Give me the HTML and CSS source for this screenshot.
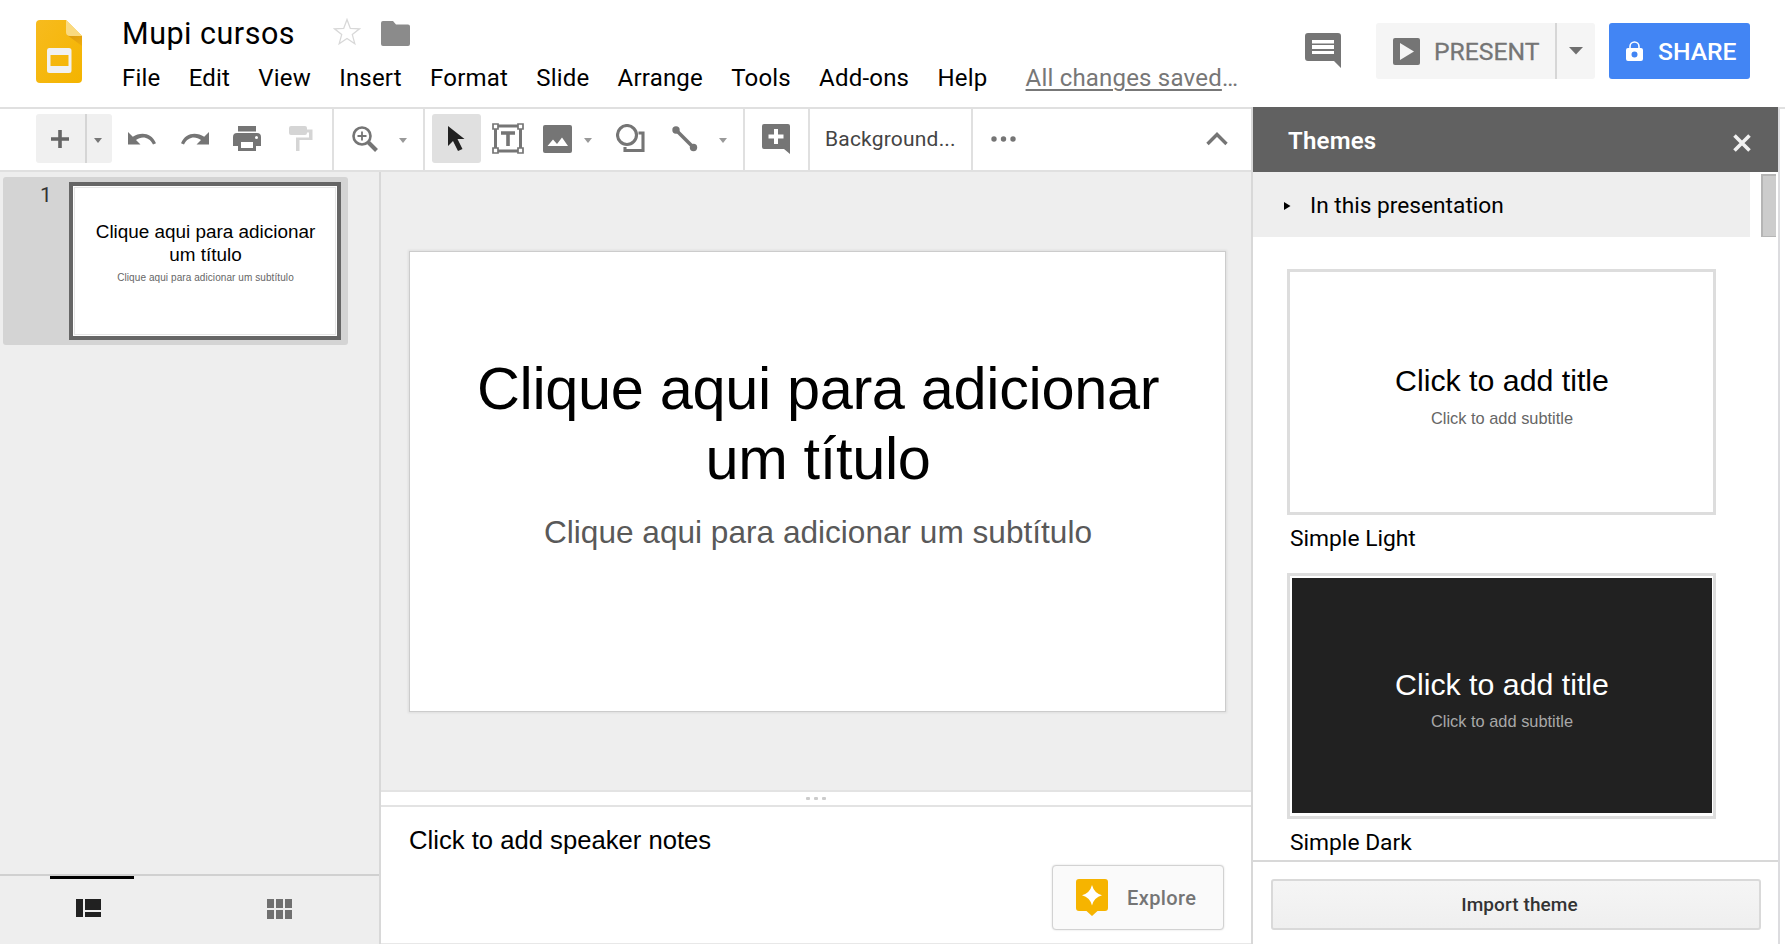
FILE: index.html
```html
<!DOCTYPE html>
<html lang="en">
<head>
<meta charset="utf-8">
<title>Mupi cursos</title>
<link rel="stylesheet" href="styles.css">
</head>
<body>
<div class="app">
  <header class="header">
    <svg class="logo" width="46" height="63" viewBox="0 0 46 63">
      <defs>
        <linearGradient id="page" x1="0" y1="0" x2="1" y2="1"><stop offset="0" stop-color="#f7bb1e"/><stop offset="1" stop-color="#f4b400"/></linearGradient>
        <linearGradient id="shade" x1="0" y1="0" x2="1" y2="1"><stop offset="0" stop-color="#d99a12"/><stop offset="1" stop-color="#f0ac0a"/></linearGradient>
      </defs>
      <path fill="url(#page)" d="M4 0h26l16 16v43a4 4 0 0 1-4 4H4a4 4 0 0 1-4-4V4a4 4 0 0 1 4-4z"/>
      <path fill="url(#shade)" d="M31 15l15 11V16z"/>
      <path fill="#fada80" d="M30 0l16 16H34a4 4 0 0 1-4-4z"/>
      <path fill="#f1f1f1" fill-rule="evenodd" d="M13 28h20a2.500 2.500 0 0 1 2.500 2.500v20a2.500 2.500 0 0 1-2.500 2.500H13.500a2.500 2.500 0 0 1-2.500-2.500v-20A2.500 2.500 0 0 1 13 28zm1.500 7v11h18V35z"/>
    </svg>
    <div class="headings">
      <div class="title-row">
        <h1 class="doc-title">Mupi cursos</h1>
        <svg class="star" width="28" height="28" viewBox="0 0 28 28"><path fill="none" stroke="#d8d8d8" stroke-width="1.300" d="M14 1.500l3.300 8.900 9.200.4-7.200 5.800 2.500 9.100-7.800-5.200-7.800 5.200 2.500-9.100-7.200-5.800 9.200-.4z"/></svg>
        <svg class="folder" width="29" height="25" viewBox="0 0 29 25"><path fill="#8b8b8b" d="M2 0h10l3 3.500h12a2 2 0 0 1 2 2V23a2 2 0 0 1-2 2H2a2 2 0 0 1-2-2V2a2 2 0 0 1 2-2z"/></svg>
      </div>
      <nav class="menu">
        <span>File</span><span>Edit</span><span>View</span><span>Insert</span><span>Format</span><span>Slide</span><span>Arrange</span><span>Tools</span><span>Add-ons</span><span>Help</span>
        <span class="saved"><u>All changes saved</u>…</span>
      </nav>
    </div>
    <div class="actions">
      <svg class="comments" width="36" height="36" viewBox="0 0 36 36"><path fill="#757575" fill-rule="evenodd" d="M3 0h30a3 3 0 0 1 3 3v32l-7-7H3a3 3 0 0 1-3-3V3a3 3 0 0 1 3-3zm4 7v3.500h22V7zm0 5v4h22v-4zm0 6v3h22v-3z"/></svg>
      <div class="present">
        <div class="present-main">
          <svg width="27" height="27" viewBox="0 0 27 27"><rect width="27" height="27" rx="2" fill="#757575"/><path fill="#f5f5f5" d="M7 5v17l14-8.500z"/></svg>
          <span>PRESENT</span>
        </div>
        <div class="present-menu"><svg width="14" height="8" viewBox="0 0 14 8"><path fill="#6f6f6f" d="M0 0h14L7 7.500z"/></svg></div>
      </div>
      <div class="share">
        <svg width="17" height="20" viewBox="0 0 17 20"><path fill="none" stroke="#fff" stroke-width="1.600" d="M4 8V5.500a4.500 4.500 0 0 1 9 0V8"/><path fill="#fff" fill-rule="evenodd" d="M2 7h13a2 2 0 0 1 2 2v9a2 2 0 0 1-2 2H2a2 2 0 0 1-2-2V9a2 2 0 0 1 2-2zm6.500 3.500a3 3 0 1 0 0 6 3 3 0 0 0 0-6z"/></svg>
        <span>SHARE</span>
      </div>
    </div>
  </header>

  <div class="below">
    <div class="editor">
      <div class="toolbar">
        <div class="group group-file">
          <div class="new-slide">
            <div class="new-main"><svg width="18" height="18" viewBox="0 0 18 18"><path fill="none" stroke="#666" stroke-width="3.600" d="M9 0v18M0 9h18"/></svg></div>
            <div class="new-menu"><i class="caret caret-strong"></i></div>
          </div>
          <div class="tool"><svg width="28" height="14" viewBox="0 0 28 14"><path fill="#757575" d="M0 0v12.500h12.500L8 8C13.500 4 21 4.500 25 12.500l3-1.200C23.500 0 12 0 4.800 4.800z"/></svg></div>
          <div class="tool"><svg width="28" height="14" viewBox="0 0 28 14"><path fill="#757575" d="M28 0v12.500H15.500L20 8C14.500 4 7 4.500 3 12.500l-3-1.200C4.500 0 16 0 23.200 4.800z"/></svg></div>
          <div class="tool print"><svg width="28" height="25" viewBox="0 0 28 25"><path fill="#757575" fill-rule="evenodd" d="M5 0h18v5.500H5zM4 7h20a4 4 0 0 1 4 4v9h-5v5H5v-5H0v-9a4 4 0 0 1 4-4zm19.500 3a1.500 1.500 0 1 0 0 3 1.500 1.500 0 0 0 0-3zM8 16v6h12v-6z"/></svg></div>
          <div class="tool"><svg width="24" height="25" viewBox="0 0 24 25"><path fill="#d5d5d5" d="M2 0h14a2 2 0 0 1 2 2v1.500h5.500v10.500h-13v11H7V11.500h13V6.500h-2V7a2 2 0 0 1-2 2H2a2 2 0 0 1-2-2V2a2 2 0 0 1 2-2z"/></svg></div>
        </div>
        <div class="group group-zoom">
          <div class="tool w34"><svg width="26" height="26" viewBox="0 0 26 26"><g fill="none" stroke="#757575"><circle cx="10" cy="10" r="8.500" stroke-width="2.600"/><path stroke-width="1.800" d="M10 5.500v9M5.500 10h9"/><path stroke-width="4" d="M16.500 16.500l8 8"/></g></svg></div>
          <div class="tool w41"><i class="caret"></i></div>
        </div>
        <div class="group group-insert">
          <div class="tool selected"><svg width="17" height="25" viewBox="0 0 17 25"><path fill="#212121" d="M0 0v20l5-5 5 10 4.500-2L9.500 13H16.500z"/></svg></div>
          <div class="tool w54"><svg width="32" height="31" viewBox="0 0 32 31"><g fill="none" stroke="#757575"><path stroke-width="3" d="M3.500 3h25v25h-25z"/><g fill="#fff" stroke-width="1.700"><path d="M1 1h5v5H1zM26 1h5v5h-5zM1 25h5v5H1zM26 25h5v5h-5z"/></g><path stroke-width="3.600" d="M9 10h14M16 10v13"/></g></svg></div>
          <div class="tool w45"><svg width="29" height="28" viewBox="0 0 29 28"><rect width="29" height="28" rx="2" fill="#757575"/><path fill="#fff" d="M4.500 21L10 14.500l4 4.500 5-6.500 6 8.500z"/></svg></div>
          <div class="tool w17"><i class="caret"></i></div>
          <div class="tool w66"><svg width="29" height="29" viewBox="0 0 29 29"><g fill="none" stroke="#757575" stroke-width="3.100"><circle cx="11" cy="11" r="9.500"/><path d="M22.500 9h4.500v17.500H9V23"/></g></svg></div>
          <div class="tool w39"><svg width="26" height="26" viewBox="0 0 26 26"><path stroke="#757575" stroke-width="3.600" d="M4 4l18 18"/><circle cx="4" cy="4" r="3.700" fill="#757575"/><circle cx="21.500" cy="21.500" r="3.700" fill="#757575"/></svg></div>
          <div class="tool w39 line-menu"><i class="caret"></i></div>
        </div>
        <div class="group"><div class="tool w63"><svg width="28" height="30" viewBox="0 0 28 30"><path fill="#757575" d="M2 0h24a2 2 0 0 1 2 2v28l-6-5H2a2 2 0 0 1-2-2V2a2 2 0 0 1 2-2z"/><path fill="none" stroke="#fff" stroke-width="4" d="M14 5v15M6.500 12.500h15"/></svg></div></div>
        <div class="group group-background"><span>Background...</span></div>
        <div class="group group-more">
          <div class="tool w61"><svg width="25" height="6" viewBox="0 0 25 6" fill="#757575"><circle cx="3" cy="3" r="2.700"/><circle cx="12.500" cy="3" r="2.700"/><circle cx="22" cy="3" r="2.700"/></svg></div>
          <div class="tool w69"><svg width="22" height="14" viewBox="0 0 22 14"><path fill="none" stroke="#757575" stroke-width="3.400" d="M1.500 12L11 2.500l9.500 9.500"/></svg></div>
        </div>
      </div>

      <div class="work">
        <aside class="filmstrip">
          <div class="film-list">
            <div class="film-item">
              <span class="film-number">1</span>
              <div class="thumb">
                <p class="thumb-title">Clique aqui para adicionar<br>um título</p>
                <p class="thumb-sub">Clique aqui para adicionar um subtítulo</p>
              </div>
            </div>
          </div>
          <div class="film-views">
            <div class="view view-active"><svg width="25" height="18" viewBox="0 0 25 18" fill="#212121"><path d="M0 0h7v18H0zM9 0h16v11H9zM9 13h16v5H9z"/></svg></div>
            <div class="view"><svg width="25" height="20" viewBox="0 0 25 20" fill="#707070"><path d="M0 0h7v9H0zM9 0h7v9H9zM18 0h7v9h-7zM0 11h7v9H0zM9 11h7v9H9zM18 11h7v9h-7z"/></svg></div>
          </div>
        </aside>
        <main class="stage">
          <div class="canvas">
            <section class="slide">
              <p class="slide-title">Clique aqui para adicionar<br>um título</p>
              <p class="slide-sub">Clique aqui para adicionar um subtítulo</p>
            </section>
          </div>
          <div class="splitter"><i></i><i></i><i></i></div>
          <div class="notes">
            <p>Click to add speaker notes</p>
            <div class="explore">
              <svg width="32" height="37" viewBox="0 0 32 37"><path fill="#f6b400" d="M3 0h26a3 3 0 0 1 3 3v26a3 3 0 0 1-3 3h-7.500L16 37l-5.500-5H3a3 3 0 0 1-3-3V3a3 3 0 0 1 3-3z"/><path fill="#fff" d="M16 6q2 8 10 10.300-8 2.200-10 10.200-2-8-10-10.200Q14 14 16 6z"/></svg>
              <span>Explore</span>
            </div>
          </div>
        </main>
      </div>
    </div>

    <aside class="themes">
      <div class="themes-head">
        <h2>Themes</h2>
        <svg width="18" height="18" viewBox="0 0 18 18"><path stroke="#f1f1f1" stroke-width="3.600" d="M1.500 1.500l15 15M16.500 1.500l-15 15"/></svg>
      </div>
      <div class="themes-body">
        <div class="themes-list">
          <div class="in-this">
            <svg width="7" height="8" viewBox="0 0 7 8"><path d="M0 0v8l6.500-4z"/></svg>
            <span>In this presentation</span>
          </div>
          <div class="card">
            <div class="preview light"><p class="card-title">Click to add title</p><p class="card-sub">Click to add subtitle</p></div>
          </div>
          <div class="card-name">Simple Light</div>
          <div class="card">
            <div class="preview dark"><p class="card-title">Click to add title</p><p class="card-sub">Click to add subtitle</p></div>
          </div>
          <div class="card-name">Simple Dark</div>
        </div>
        <div class="scroll"><div class="scroll-thumb"></div></div>
      </div>
      <div class="themes-foot"><div class="import">Import theme</div></div>
    </aside>
    <div class="edge"></div>
  </div>
</div>
</body>
</html>
```
FILE: styles.css
```css
* { box-sizing: border-box; margin: 0; padding: 0; }
body { background: #fff; font-family: Roboto, sans-serif; color: #000; }
svg { display: block; flex: none; }
.app { width: 1785px; height: 944px; display: flex; flex-direction: column; overflow: hidden; }

.header { height: 107px; display: flex; padding-left: 36px; flex: none; }
.logo { margin-top: 20px; }
.headings { padding-left: 40px; flex: 1; }
.title-row { height: 58px; display: flex; align-items: flex-start; padding-top: 16px; }
.doc-title { font-size: 30.500px; font-weight: 400; line-height: 36px; width: 211px; letter-spacing: 0.500px; white-space: nowrap; }
.star { margin-top: 2px; }
.folder { margin: 5px 0 0 20px; }
.menu { display: flex; font-size: 24px; line-height: 28px; padding-top: 6px; gap: 28.200px; white-space: nowrap; letter-spacing: 0.200px; }
.saved { color: #777; margin-left: 10px; }
.saved u { text-underline-offset: 3px; text-decoration-thickness: 2px; }

.actions { display: flex; padding: 23px 35px 0 0; }
.comments { margin: 10px 35px 0 0; }
.present { width: 219px; height: 56px; background: #f5f5f5; border-radius: 3px; display: flex; color: #757575; font-size: 24.700px; margin-right: 14px; }
.present-main { width: 181px; border-right: 2px solid #d6d6d6; padding: 0 0 0 17px; display: flex; align-items: center; gap: 14px; -webkit-text-stroke: 0.300px #757575; }
.present-menu { flex: 1; display: flex; align-items: center; justify-content: center; }
.share { width: 141px; height: 56px; background: #4285f4; border-radius: 3px; color: #fff; display: flex; align-items: center; font-size: 24.700px; font-weight: 500; padding: 0 0 0 17px; gap: 15px; }

.below { flex: 1; display: flex; min-height: 0; }
.editor { width: 1251px; display: flex; flex-direction: column; }
.toolbar { height: 65px; border-top: 2px solid #e0e0e0; border-bottom: 2px solid #e0e0e0; display: flex; flex: none; }
.group { display: flex; align-items: center; border-right: 2px solid #e0e0e0; padding-bottom: 2px; }
.group-file { width: 334px; padding-left: 36px; }
.group-zoom { width: 91px; padding-left: 14px; }
.group-insert { padding-left: 7px; }
.group-background { width: 163px; padding-left: 15px; font-size: 21px; letter-spacing: 0.200px; color: #444; }
.group-more { flex: 1; justify-content: space-between; border-right: 0; }
.new-slide { width: 76px; height: 49px; background: #f0f0f0; border-radius: 3px; display: flex; margin-right: 3px; }
.new-main { width: 51px; border-right: 2px solid #d5d5d5; display: flex; align-items: center; padding-left: 15px; }
.new-menu { flex: 1; display: flex; align-items: center; padding-left: 7px; }
.tool { width: 53px; height: 49px; display: flex; align-items: center; justify-content: center; }
.print { padding-right: 2px; }
.selected { width: 49px; background: #e0e0e0; border-radius: 3px; }
.w17 { width: 17px; padding-right: 1px; } .w34 { width: 34px; } .w39 { width: 39px; } .w41 { width: 41px; }
.w45 { width: 45px; } .w54 { width: 54px; } .w61 { width: 61px; } .w63 { width: 63px; padding-right: 2px; }
.w66 { width: 68px; padding-right: 2px; } .w69 { width: 69px; }
.line-menu { padding-right: 2px; }
.caret { border: 4.500px solid transparent; border-top: 5px solid #999; border-bottom: 0; margin-top: 3px; }
.caret-strong { border-top-color: #777; }

.work { flex: 1; display: flex; min-height: 0; }
.filmstrip { width: 381px; background: #eee; border-right: 2px solid #d8d8d8; display: flex; flex-direction: column; }
.film-list { flex: 1; padding: 5px 0 0 3px; }
.film-item { width: 345px; height: 168px; background: #d4d4d4; border-radius: 3px; display: flex; padding-top: 5px; }
.film-number { width: 66px; padding: 1px 0 0 37px; font-size: 21px; line-height: 25px; color: #333; }
.thumb { width: 272px; height: 158px; border: 4px solid #666; background: #fff; outline: 1px solid #e6e6e6; outline-offset: -6px; text-align: center; font-family: "Liberation Sans", Arial, sans-serif; padding: 34px 0 0 1px; white-space: nowrap; }
.thumb-title { font-size: 18.900px; line-height: 23.400px; }
.thumb-sub { font-size: 10px; letter-spacing: 0.080px; line-height: 12px; color: #666; margin-top: 5px; }
.film-views { height: 70px; border-top: 2px solid #d0d0d0; display: flex; padding-left: 50px; gap: 103px; }
.view { width: 84px; display: flex; justify-content: center; padding-top: 23px; }
.view-active { border-top: 3px solid #000; padding-top: 20px; padding-right: 7px; }

.stage { flex: 1; display: flex; flex-direction: column; }
.canvas { height: 618px; background: #eee; padding: 79px 0 0 28px; }
.slide { width: 817px; height: 461px; background: #fff; border: 1px solid #ccc; box-shadow: 0 0 2px 1px #dedede; font-family: "Liberation Sans", Arial, sans-serif; text-align: center; padding: 102px 0 0 1px; white-space: nowrap; }
.slide-title { font-size: 59.500px; letter-spacing: -0.350px; line-height: 70px; }
.slide-sub { font-size: 31.600px; line-height: 36px; color: #595959; margin-top: 20px; }
.splitter { height: 17px; border-top: 2px solid #e3e3e3; border-bottom: 2px solid #e3e3e3; display: flex; justify-content: center; align-items: center; gap: 4px; }
.splitter i { width: 4px; height: 3px; background: #ccc; border-radius: 1px; }
.notes { flex: 1; border-bottom: 1px solid #e8e8e8; padding: 19px 0 0 28px; font-family: "Liberation Sans", Arial, sans-serif; font-size: 25.650px; line-height: 29px; }
.explore { width: 172px; height: 65px; margin: 10px 0 0 643px; border: 1px solid #d2d2d2; box-shadow: 0 0 2px #d8d8d8; border-radius: 4px; background: #fafafa; display: flex; align-items: center; padding-left: 23px; gap: 19px; font: 500 20px/24px Roboto, sans-serif; letter-spacing: 0.400px; color: #757575; }

.themes { width: 527px; border-left: 2px solid #d8d8d8; display: flex; flex-direction: column; }
.themes-head { height: 65px; background: #616161; color: #fff; display: flex; align-items: center; justify-content: space-between; padding: 2px 27px 0 35px; }
.themes-head svg { margin-top: 5px; }
.themes-head h2 { font-size: 24px; font-weight: 600; letter-spacing: 0.200px; line-height: 28px; }
.themes-body { height: 688px; display: flex; overflow: hidden; }
.themes-list { width: 497px; }
.in-this { height: 65px; background: #eee; display: flex; align-items: center; padding: 2px 0 0 31px; gap: 19px; font-size: 22.700px; margin-bottom: 32px; }
.card { width: 429px; height: 246px; border: 3px solid #ddd; margin-left: 34px; padding: 2px 1px 2px 2px; }
.preview { height: 235px; padding-top: 89px; text-align: center; font-family: "Liberation Sans", Arial, sans-serif; white-space: nowrap; }
.card-title { font-size: 30.300px; line-height: 36px; }
.card-sub { font-size: 16.400px; line-height: 18px; color: #666; margin-top: 10px; }
.dark { background: #212121; color: #fff; }
.dark .card-sub { color: #a8a8a8; margin-top: 9px; }
.card-name { height: 58px; padding: 10px 0 0 37px; font-size: 22.800px; line-height: 28px; }
.scroll { padding: 2px 0 0 11px; }
.scroll-thumb { width: 15px; height: 63px; background: #ccc; border: 1px solid #b5b5b5; border-width: 2px 0 1px 2px; }
.themes-foot { flex: 1; border-top: 2px solid #d8d8d8; padding: 17px 17px 0 18px; }
.import { height: 51px; border: 2px solid #d9d9d9; border-radius: 3px; background: linear-gradient(#f5f5f5, #efefef); text-align: center; font-weight: 500; font-size: 19px; letter-spacing: 0.100px; line-height: 47px; padding-left: 7px; color: #333; }
.edge { width: 7px; border-top: 2px solid #e0e0e0; border-left: 2px solid #dcdcdf; }
```
